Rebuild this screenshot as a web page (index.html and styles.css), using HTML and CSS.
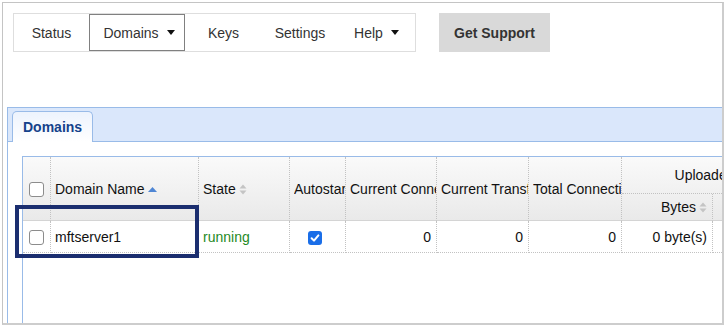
FILE: index.html
```html
<!DOCTYPE html>
<html>
<head>
<meta charset="utf-8">
<link rel="stylesheet" href="styles.css">
</head>
<body>
<div class="frame">
  <div class="toolbar">
    <nav class="nav">
      <div class="nav-item w-status">Status</div>
      <div class="nav-item w-domains active">Domains<span class="caret"></span></div>
      <div class="nav-item w-keys">Keys</div>
      <div class="nav-item w-settings">Settings</div>
      <div class="nav-item w-help">Help<span class="caret"></span></div>
    </nav>
    <button class="support">Get Support</button>
  </div>
  <div class="panel">
    <div class="strip"><div class="tab">Domains</div></div>
    <div class="panel-body">
      <div class="grid">
        <table class="tbl">
          <colgroup>
            <col class="c-cb"><col class="c-name"><col class="c-state"><col class="c-auto"><col class="c-cc"><col class="c-ct"><col class="c-tc"><col class="c-bytes"><col class="c-extra">
          </colgroup>
          <thead>
            <tr class="h1">
              <th rowspan="2" class="cb-cell"><span class="cb"></span></th>
              <th rowspan="2">Domain Name<svg class="sort" width="9" height="5" viewBox="0 0 9 5"><path d="M0 5L4.5 0L9 5Z" fill="#4f86d4"/></svg></th>
              <th rowspan="2">State<svg class="sort2" width="8" height="11" viewBox="0 0 8 11"><path d="M0.5 4.5L4 0.5L7.5 4.5Z M0.5 6.5L4 10.5L7.5 6.5Z" fill="#c4c4c4"/></svg></th>
              <th rowspan="2" class="cut"><span class="clip">Autostart</span></th>
              <th rowspan="2" class="cut"><span class="clip">Current Connections</span></th>
              <th rowspan="2" class="cut"><span class="clip">Current Transfers</span></th>
              <th rowspan="2" class="cut"><span class="clip">Total Connections</span></th>
              <th colspan="2" class="group">Uploaded</th>
            </tr>
            <tr class="h2">
              <th class="num">Bytes<svg class="sort2" width="8" height="11" viewBox="0 0 8 11"><path d="M0.5 4.5L4 0.5L7.5 4.5Z M0.5 6.5L4 10.5L7.5 6.5Z" fill="#c4c4c4"/></svg></th>
              <th class="num">Files</th>
            </tr>
          </thead>
          <tbody>
            <tr class="row">
              <td class="cb-cell"><span class="cb"></span></td>
              <td>mftserver1</td>
              <td class="running">running</td>
              <td class="center"><svg class="check" width="14" height="14" viewBox="0 0 14 14"><rect width="14" height="14" rx="3" fill="#1a6ee8"/><path d="M3.6 7.3L6 9.6L10.4 4.4" stroke="#fff" stroke-width="2" fill="none" stroke-linecap="round" stroke-linejoin="round"/></svg></td>
              <td class="num">0</td>
              <td class="num">0</td>
              <td class="num">0</td>
              <td class="num">0 byte(s)</td>
              <td class="num">0</td>
            </tr>
          </tbody>
        </table>
      </div>
    </div>
  </div>
  <div class="highlight"></div>
</div>
</body>
</html>
```

FILE: styles.css
```css
* { box-sizing: border-box; }
html, body { margin: 0; padding: 0; background: #fff; }
body { font-family: "Liberation Sans", Arial, sans-serif; font-size: 14px; color: #111; }

.frame {
  position: relative;
  margin: 2px 0 0 2px;
  width: 722px;
  height: 323px;
  border-left: 1px solid #c4c4c4;
  border-top: 1px solid #c4c4c4;
  border-right: 2px solid #cdcdcd;
  border-bottom: 2px solid #cdcdcd;
  overflow: hidden;
  display: flex;
  flex-direction: column;
}

.toolbar { display: flex; gap: 23px; margin: 10px 0 0 10px; flex: none; }
.nav { display: flex; height: 39px; border: 1px solid #dedede; }
.nav-item {
  display: flex; align-items: center; justify-content: center;
  color: #333; font-size: 14px; height: 100%;
}
.w-status { width: 75px; }
.w-domains { width: 96px; padding-left: 4px; }
.w-keys { width: 77px; }
.w-settings { width: 76px; }
.w-help { width: 77px; }
.active { border: 1px solid #808080; }
.caret {
  display: inline-block; width: 0; height: 0; margin-left: 8px;
  border-left: 4px solid transparent; border-right: 4px solid transparent;
  border-top: 5px solid #111;
}
.support {
  width: 111px; height: 39px; border: 0; background: #d9d9d9;
  font-family: "Liberation Sans", Arial, sans-serif; font-size: 14px; font-weight: bold; color: #333;
  padding: 0;
}

.panel {
  flex: 1; display: flex; flex-direction: column;
  margin: 55px 0 0 4px;
  border-left: 1px solid #99bbe8;
  min-height: 0;
}
.strip {
  flex: none; height: 35px; display: flex; align-items: flex-end;
  background: #dae7fb;
  border-top: 1px solid #99bbe8; border-bottom: 1px solid #99bbe8;
  padding-left: 4px;
}
.tab {
  height: 31px; margin-bottom: -1px;
  padding: 0 10px;
  border: 1px solid #99bbe8; border-bottom: 0;
  border-radius: 5px 5px 0 0;
  background: linear-gradient(#edf3fd, #ffffff);
  font-weight: bold; color: #15428b; line-height: 30px; font-size: 14px;
}
.panel-body { flex: 1; display: flex; flex-direction: column; padding: 14px 0 0 14px; min-height: 0; }
.grid { flex: 1; border-left: 1px solid #99bbe8; border-top: 1px solid #99bbe8; overflow: hidden; }

.tbl { table-layout: fixed; width: 765px; border-collapse: separate; border-spacing: 0; }
.c-cb { width: 28px; }
.c-name { width: 148px; }
.c-state { width: 91px; }
.c-auto { width: 56px; }
.c-cc { width: 91px; }
.c-ct { width: 92px; }
.c-tc { width: 93px; }
.c-bytes { width: 91px; }
.c-extra { width: 75px; }

thead { background: linear-gradient(#fafafa, #e9e9e9); }
th, td {
  padding: 0 4px; white-space: nowrap; overflow: hidden;
  font-size: 14px; font-weight: normal; color: #111;
  border-right: 1px dotted #c2c2c2;
}
th { text-align: left; border-bottom: 1px solid #d4d4d4; }
th.cut { padding-right: 0; }
.clip { display: block; overflow: hidden; white-space: nowrap; }
.h1 { height: 37px; }
.h2 { height: 27px; }
th.group { text-align: center; border-bottom: 1px dotted #c2c2c2; }
th.num { text-align: right; padding-right: 5px; }
.row { height: 32px; }
td { border-bottom: 1px dotted #c2c2c2; }
td.num { text-align: right; padding-right: 5px; }
td.center { text-align: center; padding: 0 6px 0 0; }
td.running { color: #1f8a1f; }
.cb-cell { text-align: center; padding: 0; }
.cb {
  display: inline-block; width: 15px; height: 15px; vertical-align: middle;
  border: 1px solid #8c8c8c; border-radius: 3px; background: #fff;
}
.sort { margin-left: 4px; vertical-align: 2px; }
.sort2 { margin-left: 3px; vertical-align: -1px; }
.check { vertical-align: middle; }

.highlight {
  position: absolute; left: 12px; top: 202px; width: 184px; height: 53px;
  border: 4px solid #1b2e6f;
}
```
